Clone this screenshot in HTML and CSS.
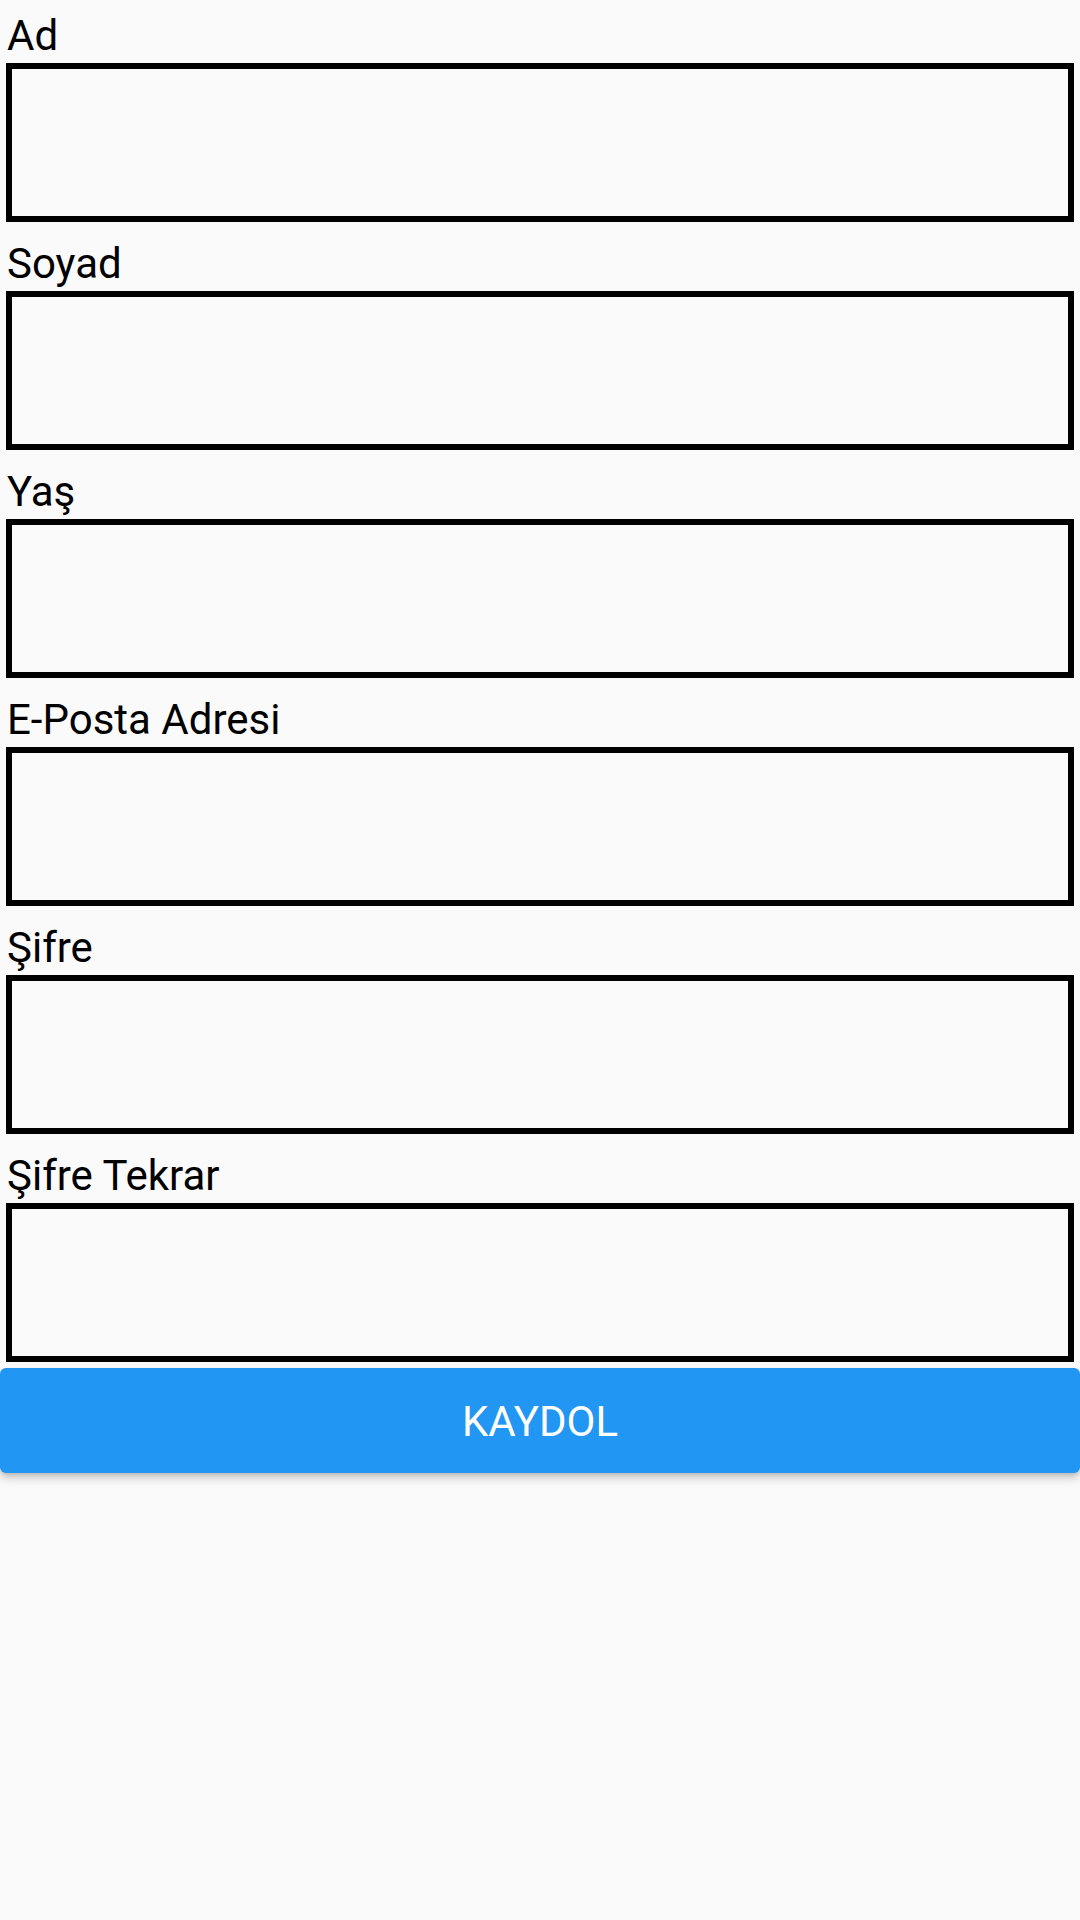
FILE: index.html
```html
<!DOCTYPE html>
<html lang="tr">
<head>
<meta charset="utf-8">
<title>Kayıt</title>
<link rel="stylesheet" href="styles.css">
</head>
<body>
<form class="form">
  <div class="field">
    <label class="label">Ad</label>
    <div class="box"></div>
  </div>
  <div class="field">
    <label class="label">Soyad</label>
    <div class="box"></div>
  </div>
  <div class="field">
    <label class="label">Yaş</label>
    <div class="box"></div>
  </div>
  <div class="field">
    <label class="label">E-Posta Adresi</label>
    <div class="box"></div>
  </div>
  <div class="field">
    <label class="label">Şifre</label>
    <div class="box"></div>
  </div>
  <div class="field">
    <label class="label">Şifre Tekrar</label>
    <div class="box"></div>
  </div>
  <button type="button" class="btn">KAYDOL</button>
</form>
</body>
</html>
```

FILE: styles.css
```css
html, body {
  margin: 0;
  padding: 0;
  background: #fafafa;
}
body {
  width: 1080px;
  height: 1920px;
  font-family: Roboto, "Noto Sans", sans-serif;
  color: #000;
}
.form {
  display: flex;
  flex-direction: column;
  gap: 17px;
  padding-top: 11px;
}
.field {
  display: flex;
  flex-direction: column;
  padding: 0 6px;
}
.label {
  font-size: 42px;
  line-height: 49px;
  height: 49px;
  padding-left: 1px;
}
.box {
  margin-top: 3px;
  height: 159px;
  box-sizing: border-box;
  border: 6px solid #000;
  background: #fafafa;
}
.btn {
  margin-top: -11px;
  width: 1080px;
  height: 105px;
  border: none;
  border-radius: 6px;
  background: #2196f3;
  color: #fff;
  font-family: Roboto, "Noto Sans", sans-serif;
  font-size: 42px;
  font-weight: 400;
  padding: 0;
  padding-top: 2px;
  box-shadow: 0 6px 8px rgba(0,0,0,0.16), 0 2px 4px rgba(0,0,0,0.12);
}
```
